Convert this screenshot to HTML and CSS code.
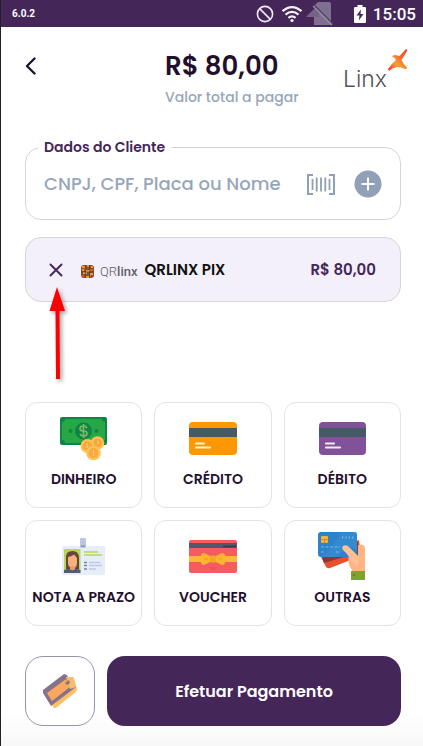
FILE: index.html
```
<!DOCTYPE html>
<html lang="pt-BR">
<head>
    <meta charset="UTF-8">
    <meta name="viewport" content="width=device-width, initial-scale=1.0">
    <link rel="stylesheet" href="styles.css">
    <title>Pagamento</title>
</head>
<body>
    <div class="app">
        <div class="status-bar">
            <span class="version">6.0.2</span>
            <div class="status-icons">
                <svg width="18" height="18" viewBox="0 0 18 18" fill="none" stroke="#f0ecf3" stroke-width="1.6">
                    <circle cx="9" cy="9" r="7.6"/>
                    <path d="M3.6 3.6L14.4 14.4"/>
                </svg>
                <svg width="22" height="18" viewBox="0 0 22 18" fill="none" stroke="#f4f1f6" stroke-width="2.2">
                    <path d="M1.5 6.2Q11-2 20.5 6.2"/>
                    <path d="M4.5 9.6Q11 4.2 17.5 9.6"/>
                    <path d="M7.4 12.8Q11 9.8 14.6 12.8"/>
                    <circle cx="11" cy="15.5" r="1.6" fill="#f4f1f6" stroke="none"/>
                </svg>
                <svg class="sim-icon" width="28" height="25" viewBox="0 0 28 25">
                    <path d="M1 16L14 3V16Z" fill="#77638a"/>
                    <path d="M9 5L13 1H24Q26 1 26 3V24H9V16H14V8Z" fill="#80708f"/>
                    <path d="M10 5L28 23" stroke="#533a67" stroke-width="1.5"/>
                    <path d="M8 5L27 24" stroke="#9a8ca6" stroke-width="1.2"/>
                </svg>
                <svg class="battery-icon" width="12" height="18" viewBox="0 0 12 18">
                    <path d="M1 2H3.5V0H8.5V2H11Q12 2 12 3V17Q12 18 11 18H1Q0 18 0 17V3Q0 2 1 2Z" fill="#fff"/>
                    <path d="M7 4.5L2.500 10.5H5.5L4.8 15.5L9.5 9H6.5Z" fill="#452659"/>
                </svg>
                <span class="clock">15:05</span>
            </div>
        </div>

        <header class="header">
            <button type="button" class="back" aria-label="Voltar">
                <svg width="12" height="18" viewBox="0 0 12 18" fill="none" stroke="#1f102d" stroke-width="2.3" stroke-linecap="round" stroke-linejoin="round">
                    <path d="M9.5 1.5L2 9L9.5 16.5"/>
                </svg>
            </button>
            <div class="total">
                <h1>R$ 80,00</h1>
                <p>Valor total a pagar</p>
            </div>
            <div class="logo">
                <span>Linx</span>
                <svg width="20" height="23" viewBox="0 0 20 23">
                    <defs>
                        <linearGradient id="flame" x1="1" y1="0" x2="0.2" y2="1">
                            <stop offset="0" stop-color="#ee4630"/>
                            <stop offset="0.4" stop-color="#f36a31"/>
                            <stop offset="0.7" stop-color="#fba02f"/>
                            <stop offset="1" stop-color="#f2472f"/>
                        </linearGradient>
                    </defs>
                    <path d="M18 0L19.500 1Q17 6 13.500 11Q15 15 19 18.500Q19 20 17 20Q13 18 9 18Q4 19 1 22L0 20Q3 15 8 11Q7 8 4 7.500Q5 6 7 6L11.500 7Q15 3 18 0Z" fill="url(#flame)"/>
                </svg>
            </div>
        </header>

        <main class="content">
            <fieldset class="customer">
                <legend><label for="customer">Dados do Cliente</label></legend>
                <input type="text" id="customer" name="customer" placeholder="CNPJ, CPF, Placa ou Nome">
                <button type="button" aria-label="Ler código de barras">
                    <svg width="28" height="21" viewBox="0 0 28 21" fill="none" stroke="#8fa0b6" stroke-width="2">
                        <path d="M6 1H1V20H6M22 1H27V20H22"/>
                        <path d="M5.5 5V16M9.7 3.5V17.5M14 3.5V17.5M18.3 3.5V17.5M22.5 5V16" stroke-width="1.8"/>
                    </svg>
                </button>
                <button type="button" aria-label="Adicionar cliente">
                    <svg width="28" height="28" viewBox="0 0 28 28">
                        <circle cx="14" cy="14" r="13.5" fill="#8fa0b8"/>
                        <path d="M14 7.5V20.5M7.5 14H20.5" stroke="#fff" stroke-width="2"/>
                    </svg>
                </button>
            </fieldset>

            <div class="payment">
                <button type="button" class="remove" aria-label="Remover pagamento">
                    <svg width="14" height="14" viewBox="0 0 14 14" stroke="#472a5c" stroke-width="2" stroke-linecap="round">
                        <path d="M1.5 1.5L12.5 12.5M12.5 1.5L1.5 12.5"/>
                    </svg>
                    <svg class="arrow" width="28" height="102" viewBox="0 0 28 102">
                        <path d="M14 3L22 27H16.500L17 95H13L12.500 27H6.500Z" fill="#f00"/>
                    </svg>
                </button>
                <span class="brand">
                    <svg width="13" height="13" viewBox="0 0 13 13">
                        <rect width="13" height="13" rx="3" fill="#855030"/>
                        <path d="M1 2H4M6 1H8M10 2H12M1 5H3M5 6H9M2 8H6M9 9H12M5 12H8" stroke="#ed9a28" stroke-width="2"/>
                        <path d="M3 4H5M9 5H12M1 11H3M8 11H10" stroke="#df562d" stroke-width="2"/>
                        <path d="M4.5 0V13M8.5 0V13M0 7H13" stroke="#3d3029" stroke-width="0.5"/>
                    </svg>
                    <span><span class="light">QR</span>linx</span>
                </span>
                <span class="payment-name">QRLINX PIX</span>
                <span class="payment-value">R$ 80,00</span>
            </div>

            <div class="methods">
                <button type="button" class="method">
                    <svg width="54" height="48" viewBox="0 0 54 48">
                        <rect x="3" y="3" width="47" height="28" rx="2" fill="#10834a"/>
                        <path d="M8 5H45Q45 8 48 8V26Q45 26 45 29H8Q8 26 5 26V8Q8 8 8 5Z" fill="#28a745"/>
                        <circle cx="13.5" cy="17" r="2" fill="#10834a"/>
                        <circle cx="39.5" cy="17" r="2" fill="#10834a"/>
                        <circle cx="26.5" cy="17" r="8.5" fill="#10834a"/>
                        <path d="M30 14Q29 12 26.5 12Q23 12 23 14.5Q23 17 26.5 17Q30 17 30 19.5Q30 22 26.5 22Q24 22 23 20M26.5 10V24" fill="none" stroke="#78ba5b" stroke-width="1.7"/>
                        <circle cx="40.5" cy="29" r="6.8" fill="#ffc253"/>
                        <circle cx="40.5" cy="29" r="4.5" fill="#f6a83d"/>
                        <circle cx="30.5" cy="32" r="7" fill="#ffc253"/>
                        <circle cx="30.5" cy="32" r="4.7" fill="#f6a83d"/>
                        <circle cx="36.5" cy="39" r="7.3" fill="#ffc456"/>
                        <circle cx="36.5" cy="39" r="5" fill="#f6aa3f"/>
                        <path d="M36.5 36V42M30 29V34M41 26.5V30" stroke="#ffcc6b" stroke-width="1.3"/>
                    </svg>
                    <span>DINHEIRO</span>
                </button>
                <button type="button" class="method">
                    <svg width="54" height="48" viewBox="0 0 54 48">
                        <rect x="3" y="8" width="48" height="33" rx="4" fill="#ff9800"/>
                        <path d="M3 14H51V23H3Z" fill="#455a64"/>
                        <path d="M10 29.5H18M10 33.5H24" stroke="#fff3dc" stroke-width="2.2" stroke-linecap="round"/>
                    </svg>
                    <span>CRÉDITO</span>
                </button>
                <button type="button" class="method">
                    <svg width="54" height="48" viewBox="0 0 54 48">
                        <rect x="4" y="8" width="47" height="33" rx="4" fill="#815299"/>
                        <path d="M4 14H51V23H4Z" fill="#455a64"/>
                        <path d="M11 29.5H19M11 33.5H25" stroke="#f4ebf7" stroke-width="2.2" stroke-linecap="round"/>
                    </svg>
                    <span>DÉBITO</span>
                </button>
                <button type="button" class="method">
                    <svg width="54" height="48" viewBox="0 0 54 48">
                        <rect x="5" y="14" width="43" height="29" rx="1.5" fill="#e7eefa"/>
                        <rect x="23" y="6" width="6" height="10" rx="1" fill="#bdc8dd"/>
                        <path d="M24 14H28" stroke="#95a3ba" stroke-width="2"/>
                        <rect x="7" y="17" width="16.5" height="24" fill="#b8d65b"/>
                        <path d="M9 37V25Q9 19 15.5 19Q22 19 22 26V37Z" fill="#69453c"/>
                        <path d="M11 25Q15 24 17 22.5L20 26V31Q20 36 15.5 37Q11 35 11 31Z" fill="#f6af7d"/>
                        <path d="M13 34H18V39H13Z" fill="#e69e70"/>
                        <path d="M7 41V38L12 36.5Q15.5 40 19 36.5L23.5 38V41Z" fill="#565c70"/>
                        <path d="M27 20H41M27 23H45" stroke="#b7d758" stroke-width="1.7"/>
                        <path d="M27 30.500H30M27 33.500H30M27 37H30" stroke="#7585a5" stroke-width="1.5"/>
                        <path d="M32 30.500H43M32 33.500H45M32 37H39" stroke="#bdc9df" stroke-width="1.3"/>
                    </svg>
                    <span>NOTA A PRAZO</span>
                </button>
                <button type="button" class="method">
                    <svg width="54" height="48" viewBox="0 0 54 48">
                        <rect x="3" y="8" width="48" height="33" rx="2" fill="#f65b60"/>
                        <path d="M3 11H51V16H3Z" fill="#515867"/>
                        <path d="M37 14.5H50" stroke="#333a49" stroke-width="1.5"/>
                        <path d="M3 24H51V30H3Z" fill="#fcb83b"/>
                        <path d="M26 25L18 21Q15 21 15 24V30Q15 33 18 33L26 29ZM28 25L36 21Q39 21 39 24V30Q39 33 36 33L28 29Z" fill="#ffb52d"/>
                        <path d="M18 27H22M32 27H36" stroke="#f0a42c" stroke-width="1.4"/>
                        <rect x="24" y="23.500" width="6" height="7" rx="1.5" fill="#f5a528"/>
                        <path d="M23 35H31L27 38Z" fill="#ea5057"/>
                    </svg>
                    <span>VOUCHER</span>
                </button>
                <button type="button" class="method">
                    <svg width="54" height="48" viewBox="0 0 54 48">
                        <path d="M6 25L44 8L46 24L15 36Q12 37 10.5 34Z" fill="#e8502c"/>
                        <path d="M7 25H29L9 31Z" fill="#873b31"/>
                        <path d="M42 8L46 20L39 25Z" fill="#824039"/>
                        <path d="M43 13Q50 11 50 17V41H37V38Q32 32 34 22L43 25Z" fill="#ffb482"/>
                        <path d="M6 0H39Q42 0 42 3V22Q42 25 39 25H6Q3 25 3 22V3Q3 0 6 0Z" fill="#2d83cb"/>
                        <path d="M26 0H39Q42 0 42 3V18Q34 11 22 25H6Q18 17 26 0Z" fill="#3d91d4" opacity="0.5"/>
                        <rect x="6" y="4" width="7" height="7" rx="1" fill="#f8b23a"/>
                        <path d="M6 7.5H13M9.5 7.5V11" stroke="#ca842b" stroke-width="0.8"/>
                        <path d="M27 5.5H39" stroke="#82baeb" stroke-width="2.2" stroke-dasharray="1.2 2.2"/>
                        <path d="M6 15H25M6 20H10M21 20H25" stroke="#62a7df" stroke-width="1.6" stroke-dasharray="3 1.5"/>
                        <path d="M28 14Q31 12 34 15L44 25L43 34L36 30Q34 23 29 19Q26 16 28 14Z" fill="#ffc094"/>
                        <path d="M36 39H50V48H36Z" fill="#7ca62b"/>
                        <circle cx="39" cy="43" r="0.9" fill="#547d22"/>
                    </svg>
                    <span>OUTRAS</span>
                </button>
            </div>

            <div class="actions">
                <button type="button" class="card-button" aria-label="Cartão">
                    <svg width="36" height="36" viewBox="0 0 36 36">
                        <path d="M7 23L29 4Q31 3 32 5L35 16Q35 18 33 19L15 34Q13 36 11 34Z" fill="#ffbf68"/>
                        <path d="M1 17L22 1L25 2L29 12L34 14L9 33L1 20Z" fill="#85738a"/>
                        <path d="M5 20L24 6L28 14L10 28Z" fill="#fba85e"/>
                        <path d="M24 4L30 4L34 14L28 16Z" fill="#f8bb70"/>
                        <path d="M12 33L34 17V19L14 34Z" fill="#ffbd65"/>
                        <path d="M23 10L27 7L28 10L25 12Z" fill="#8b7178"/>
                    </svg>
                </button>
                <button type="button" class="pay-button">Efetuar Pagamento</button>
            </div>
        </main>
    </div>
</body>
</html>
```
FILE: styles.css
```
* {
    box-sizing: border-box;
}

body {
    margin: 0;
    font-family: Poppins, Inter, sans-serif;
    color: #1f102d;
    background: #fff;
}

button {
    padding: 0;
    border: none;
    background: none;
    color: inherit;
    font-family: inherit;
    cursor: pointer;
}

svg {
    display: block;
    flex-shrink: 0;
}

.app {
    display: flex;
    flex-direction: column;
    min-height: 100vh;
    border-left: 1px solid #222;
    background: linear-gradient(to top, #f8f8f8, #fff 36px);
}

.status-bar {
    display: flex;
    align-items: center;
    justify-content: space-between;
    height: 27px;
    padding: 0 7px 0 11px;
    background: #452659;
    color: #fff;
    font-family: Roboto, sans-serif;
}

.version {
    font-size: 10px;
    font-weight: 700;
}

.status-icons {
    display: flex;
    align-items: center;
    gap: 7px;
}

.sim-icon {
    margin-left: -5px;
}

.battery-icon {
    margin-left: 14px;
}

.clock {
    font-size: 17px;
    font-weight: 500;
}

.header {
    display: grid;
    grid-template-columns: 140px 1fr auto;
    align-items: start;
    padding: 22px 15px 0 24px;
}

.back {
    width: 12px;
    margin-top: 8px;
}

.total h1 {
    margin: 0;
    font-size: 26px;
    line-height: 34px;
    font-weight: 600;
}

.total p {
    margin: 4px 0 0;
    color: #96a6bb;
    font-size: 14px;
    line-height: 20px;
    font-weight: 500;
}

.logo {
    display: flex;
    align-items: flex-start;
    gap: 1px;
    color: #555;
    font-family: Inter, sans-serif;
    font-size: 23px;
    font-weight: 300;
    line-height: 28px;
}

.logo span {
    padding-top: 16px;
}

.content {
    display: flex;
    flex: 1;
    flex-direction: column;
    padding: 31px 22px 20px 24px;
}

.customer {
    display: flex;
    align-items: center;
    gap: 19px;
    min-width: 0;
    margin: 0;
    padding: 14px 18px 21px 12px;
    border: 1px solid #d9d2df;
    border-radius: 16px;
}

.customer legend {
    padding: 0 6px;
    color: #452659;
    font-size: 14px;
    line-height: 18px;
    font-weight: 600;
}

.customer input {
    flex: 1;
    min-width: 0;
    padding: 0 6px;
    border: none;
    outline: none;
    background: none;
    color: #452659;
    font: 500 18px/28px Poppins, Inter, sans-serif;
}

.customer input::placeholder {
    color: #96a6bb;
    opacity: 1;
}

.payment {
    display: flex;
    align-items: center;
    height: 65px;
    margin: 17px 0 98px;
    padding: 0 24px 0 23px;
    border: 1px solid #d9d2df;
    border-radius: 16px;
    background: #f4f0f9;
    font-size: 15px;
    font-weight: 600;
}

.remove {
    position: relative;
}

/* callout drawn over the card, pointing at the remove button */
.arrow {
    position: absolute;
    top: 21px;
    left: -6px;
    filter: drop-shadow(2px 2px 2px rgba(0, 0, 0, 0.4));
}

.brand {
    display: flex;
    align-items: center;
    gap: 6px;
    margin: 0 7px 0 18px;
    padding-top: 4px;
    color: #62606a;
    font-family: Roboto, sans-serif;
    font-size: 13px;
    font-weight: 500;
}

.light {
    font-weight: 300;
}

.payment-name {
    color: #111;
}

.payment-value {
    margin-left: auto;
    color: #452659;
}

.methods {
    display: grid;
    grid-template-columns: repeat(3, 1fr);
    gap: 12px;
    margin-top: auto;
}

.method {
    display: flex;
    flex-direction: column;
    align-items: center;
    gap: 8px;
    height: 106px;
    padding-top: 11px;
    border: 1px solid #e0e4e8;
    border-radius: 12px;
    background: #fff;
    font-size: 14px;
    line-height: 18px;
    font-weight: 600;
    white-space: nowrap;
}

.actions {
    display: flex;
    gap: 12px;
    margin-top: 30px;
}

.card-button,
.pay-button {
    height: 70px;
    border-radius: 18px;
}

.card-button {
    display: flex;
    align-items: center;
    justify-content: center;
    width: 70px;
    border: 1px solid #9c91a8;
    background: #fff;
}

.pay-button {
    flex: 1;
    background: #452659;
    color: #fff;
    font-size: 16px;
    font-weight: 600;
}
```
